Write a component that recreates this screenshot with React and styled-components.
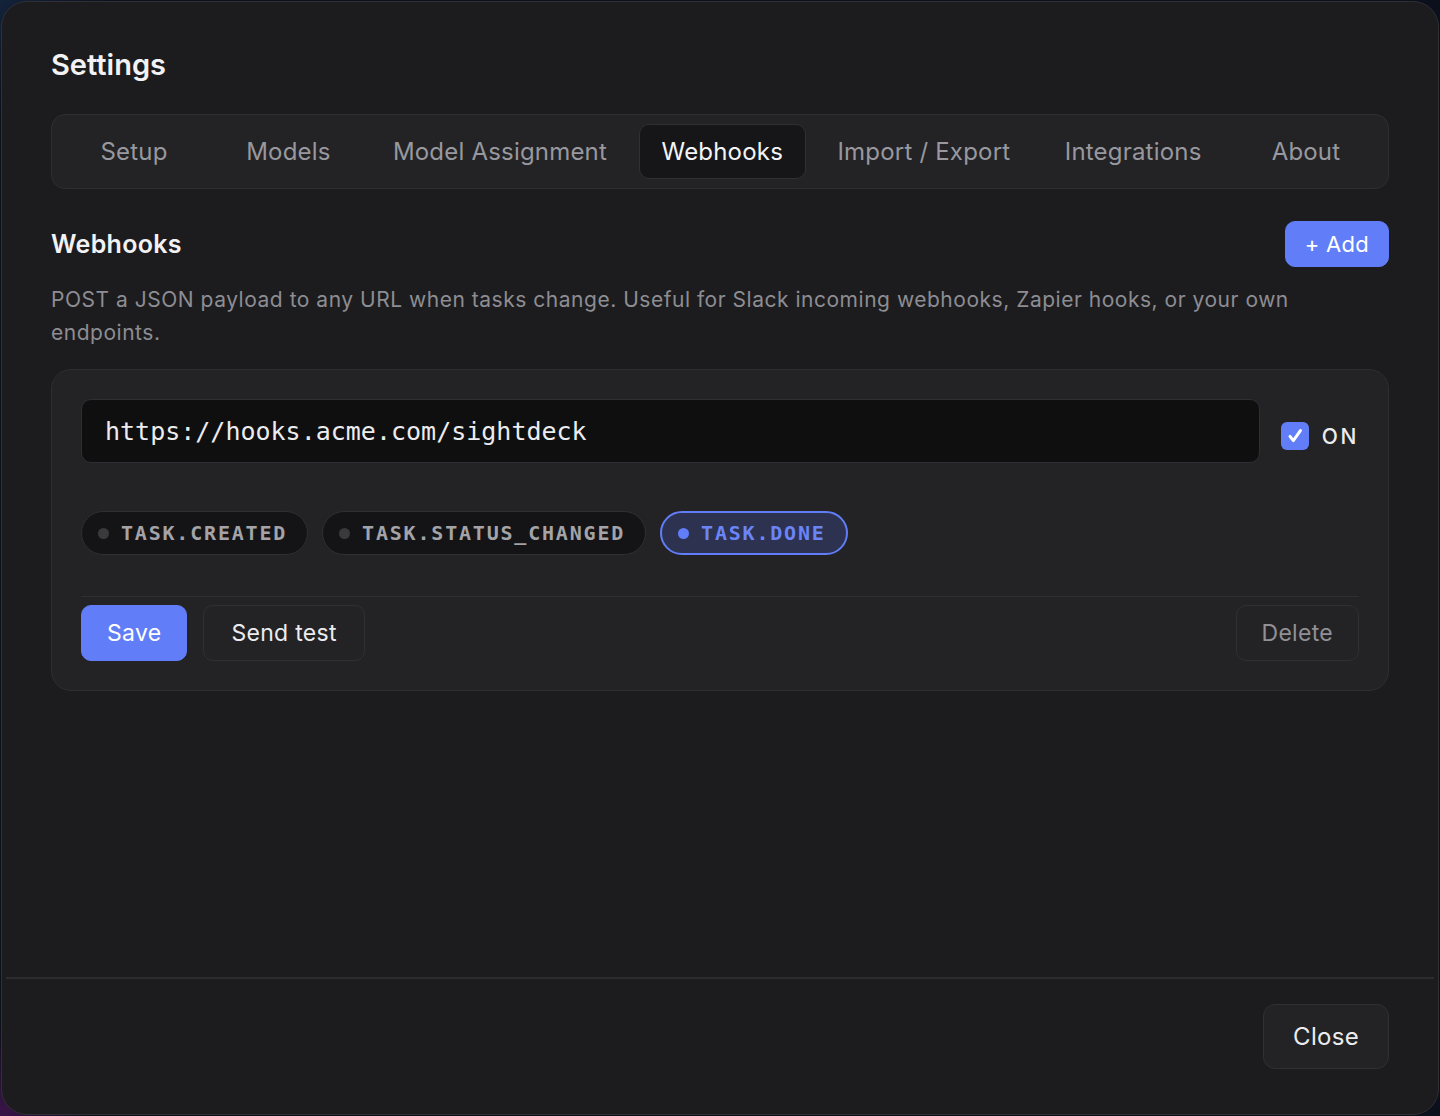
import styled, { createGlobalStyle } from "styled-components"

const Global = createGlobalStyle`
  html, body { margin: 0; padding: 0; }
  body {
    height: 1116px;
    overflow: hidden;
    background:
      radial-gradient(circle at 0% 100%, #3a1448 0, transparent 90px),
      radial-gradient(circle at 0% 0%, #13233a 0, transparent 120px),
      #0c0f1c;
    font-family: Inter, "Noto Sans", sans-serif;
  }
  * { box-sizing: border-box; }
`

const Modal = styled.div`
    margin: 1px;
    height: 1114px;
    background: #1c1c1e;
    border: 1.5px solid #303034;
    border-radius: 26px;
    display: flex;
    flex-direction: column;
    overflow: hidden;
`

const Body = styled.div`
    flex: 1;
    padding: 44px 49px 0 49px;
    display: flex;
    flex-direction: column;
`

const Title = styled.h1`
    margin: 0;
    font-size: 29px;
    line-height: 38px;
    font-weight: 600;
    color: #f2f2f4;
`

const TabBar = styled.div`
    margin-top: 30px;
    height: 75px;
    padding: 0 9px;
    display: flex;
    align-items: center;
    justify-content: space-between;
    background: #232326;
    border: 1.5px solid #2f2f33;
    border-radius: 14px;
`

const Tab = styled.div`
    min-width: 146px;
    height: 55px;
    padding: 0 22px;
    display: flex;
    align-items: center;
    justify-content: center;
    font-size: 24px;
    letter-spacing: 0.2px;
    border-radius: 10px;
    color: ${p => (p.$active ? "#f4f4f6" : "#98989e")};
    background: ${p => (p.$active ? "#161618" : "transparent")};
    border: 1.5px solid ${p => (p.$active ? "#303034" : "transparent")};
`

const SectionHead = styled.div`
    margin-top: 32px;
    display: flex;
    align-items: center;
    justify-content: space-between;
`

const SectionTitle = styled.h2`
    margin: 0;
    font-size: 25px;
    font-weight: 600;
    letter-spacing: 0.3px;
    color: #f2f2f4;
`

const Button = styled.button`
    font-family: inherit;
    font-size: ${p => p.$size || "23px"};
    height: ${p => p.$h || "56px"};
    padding: 0 ${p => p.$px || "25px"};
    border-radius: ${p => p.$r || "10px"};
    cursor: pointer;
    letter-spacing: 0.3px;
    color: ${p => (p.$primary ? "#ffffff" : p.$muted ? "#909096" : "#ececef")};
    background: ${p => (p.$primary ? "#617ef8" : p.$filled ? "#232326" : "transparent")};
    border: 1.5px solid ${p => (p.$primary ? "#617ef8" : "#303034")};
`

const Desc = styled.p`
    margin: 16px 0 0 0;
    font-size: 21px;
    line-height: 33px;
    letter-spacing: 0.52px;
    color: #8d8d93;
    max-width: 1260px;
`

const Card = styled.div`
    margin-top: 20px;
    background: #232326;
    border: 1.5px solid #2f2f33;
    border-radius: 20px;
    padding: 29px 29px 29px 29px;
`

const UrlRow = styled.div`
    display: flex;
    align-items: flex-start;
    gap: 21px;
`

const UrlInput = styled.div`
    flex: 1;
    height: 64px;
    display: flex;
    align-items: center;
    padding: 0 23px;
    background: #0f0f10;
    border: 1.5px solid #2f2f33;
    border-radius: 10px;
    font-family: "DejaVu Sans Mono", monospace;
    font-size: 25px;
    color: #ececef;
`

const Toggle = styled.label`
    margin-top: 23px;
    display: flex;
    align-items: center;
    gap: 13px;
    font-size: 21px;
    font-weight: 500;
    letter-spacing: 2.6px;
    color: #ececef;
`

const CheckBox = styled.span`
    width: 28px;
    height: 28px;
    border-radius: 6px;
    background: #617ef8;
    display: flex;
    align-items: center;
    justify-content: center;
`

const Chips = styled.div`
    margin-top: 48px;
    display: flex;
    gap: 14px;
`

const Chip = styled.span`
    height: 44px;
    display: inline-flex;
    align-items: center;
    gap: 12px;
    padding: 0 20px 0 16px;
    border-radius: 22px;
    font-family: "DejaVu Sans Mono", monospace;
    font-weight: 700;
    font-size: 20px;
    letter-spacing: 1.8px;
    color: ${p => (p.$on ? "#6b85f9" : "#a3a3a8")};
    background: ${p => (p.$on ? "#2c3250" : "#141416")};
    border: ${p => (p.$on ? "2px solid #617ef8" : "1.5px solid #2f2f33")};
`

const Dot = styled.span`
    width: 11px;
    height: 11px;
    border-radius: 50%;
    background: ${p => (p.$on ? "#617ef8" : "#3a3a3e")};
`

const Actions = styled.div`
    margin-top: 41px;
    padding-top: 8px;
    border-top: 1.5px solid #2f2f33;
    display: flex;
    align-items: center;
    gap: 16px;
`

const Spacer = styled.div`
    flex: 1;
`

const Footer = styled.div`
    margin: 0 4px;
    border-top: 2px solid #2c2c30;
    padding: 25px 45px 45px 0;
    display: flex;
    justify-content: flex-end;
`

const tabs = ["Setup", "Models", "Model Assignment", "Webhooks", "Import / Export", "Integrations", "About"]
const events = ["task.created", "task.status_changed", "task.done"]

export default function App() {
    return (
        <>
        <Global />
        <Modal>
            <Body>
                <Title>Settings</Title>
                <TabBar>
                    {tabs.map(t => (
                        <Tab key={t} $active={t === "Webhooks"}>{t}</Tab>
                    ))}
                </TabBar>
                <SectionHead>
                    <SectionTitle>Webhooks</SectionTitle>
                    <Button $primary $h="46px" $px="19px" $size="22px">+ Add</Button>
                </SectionHead>
                <Desc>
                    POST a JSON payload to any URL when tasks change. Useful for Slack incoming webhooks, Zapier hooks, or your own endpoints.
                </Desc>
                <Card>
                    <UrlRow>
                        <UrlInput>https://hooks.acme.com/sightdeck</UrlInput>
                        <Toggle>
                            <CheckBox>
                                <svg width="20" height="20" viewBox="0 0 24 24" fill="none" stroke="#fff" strokeWidth="3.6" strokeLinecap="round" strokeLinejoin="round">
                                    <path d="M6 12.5l4 5L18.5 5.5" />
                                </svg>
                            </CheckBox>
                            ON
                        </Toggle>
                    </UrlRow>
                    <Chips>
                        {events.map(e => (
                            <Chip key={e} $on={e === "task.done"}>
                                <Dot $on={e === "task.done"} />
                                {e.toUpperCase()}
                            </Chip>
                        ))}
                    </Chips>
                    <Actions>
                        <Button $primary>Save</Button>
                        <Button $px="27px">Send test</Button>
                        <Spacer />
                        <Button $muted>Delete</Button>
                    </Actions>
                </Card>
            </Body>
            <Footer>
                <Button $filled $h="65px" $px="29px" $size="24px" $r="12px">Close</Button>
            </Footer>
        </Modal>
        </>
    )
}
